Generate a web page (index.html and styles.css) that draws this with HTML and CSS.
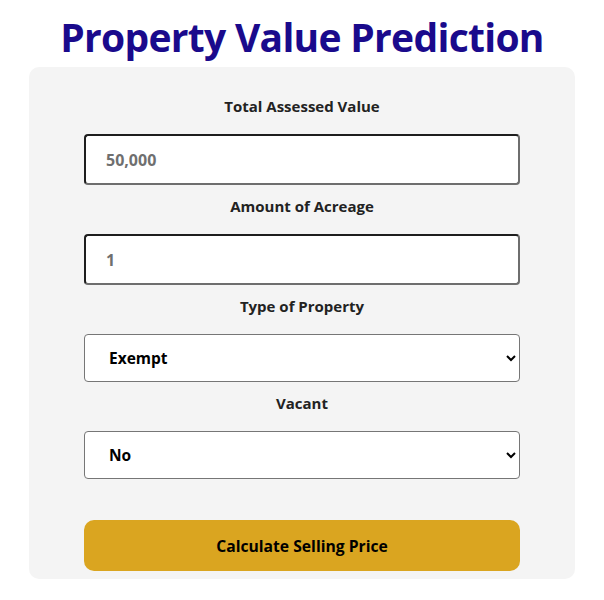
FILE: index.html
```html
<!DOCTYPE html>
<html>
<head>
<meta charset="utf-8">
<link rel="stylesheet" href="styles.css">
</head>
<body>
<h1 class="title">Property Value Prediction</h1>
<form class="card">
  <label class="label" for="total">Total Assessed Value</label>
  <input class="field" id="total" type="text" placeholder="50,000">
  <label class="label" for="acre">Amount of Acreage</label>
  <input class="field" id="acre" type="text" placeholder="1">
  <label class="label" for="type">Type of Property</label>
  <select class="select" id="type"><option>Exempt</option></select>
  <label class="label" for="vacant">Vacant</label>
  <select class="select" id="vacant"><option>No</option></select>
  <button class="btn" type="button">Calculate Selling Price</button>
</form>
</body>
</html>
```
FILE: styles.css
```css
body {
  margin: 0;
  padding: 0 29px;
  background: #ffffff;
  font-family: "Open Sans", "Noto Sans", sans-serif;
}
.title {
  margin: 0;
  padding-top: 13px;
  height: 54px;
  text-align: center;
  color: #1a0a8c;
  font-size: 39px;
  letter-spacing: -0.7px;
  font-weight: 700;
  line-height: 48px;
}
.card {
  background: #f4f4f4;
  border-radius: 10px;
  padding: 29px 0 8px;
  display: flex;
  flex-direction: column;
  align-items: center;
}
.label {
  font-size: 15px;
  font-weight: 700;
  color: #222;
  line-height: 20px;
  margin-bottom: 18px;
}
.field {
  box-sizing: border-box;
  width: 436px;
  height: 51px;
  margin: 0 0 11px;
  padding: 0 20px;
  border-width: 2px;
  border-style: solid;
  border-color: #1e1e1e #6e6e6e #6e6e6e #1e1e1e;
  border-radius: 4px;
  background: #fff;
  font-family: inherit;
  font-size: 16px;
  font-weight: 700;
  color: #222;
}
.field::placeholder {
  color: #6f6f6f;
}
.select {
  box-sizing: border-box;
  width: 436px;
  height: 48px;
  margin: 0 0 11px;
  padding: 0 20px;
  border: 1px solid #767676;
  border-radius: 4px;
  background: #fff;
  font-family: inherit;
  font-size: 15.5px;
  font-weight: 700;
  color: #000;
}
.select:last-of-type {
  margin-bottom: 41px;
}
.btn {
  width: 436px;
  height: 51px;
  border: none;
  border-radius: 10px;
  background: #daa520;
  font-family: inherit;
  font-size: 15.7px;
  font-weight: 700;
  color: #000;
}
```
